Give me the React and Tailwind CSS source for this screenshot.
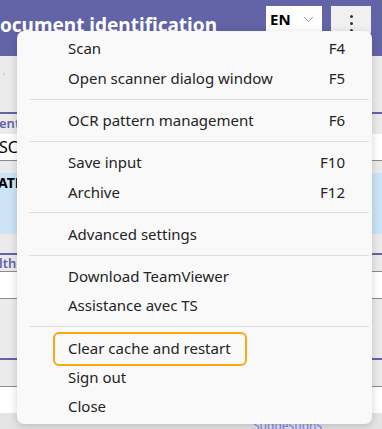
import React from 'react';

const menuGroups = [
  [
    { label: 'Scan', key: 'F4' },
    { label: 'Open scanner dialog window', key: 'F5' },
  ],
  [{ label: 'OCR pattern management', key: 'F6' }],
  [
    { label: 'Save input', key: 'F10' },
    { label: 'Archive', key: 'F12' },
  ],
  [{ label: 'Advanced settings' }],
  [{ label: 'Download TeamViewer' }, { label: 'Assistance avec TS' }],
  [{ label: 'Clear cache and restart', focused: true }, { label: 'Sign out' }, { label: 'Close' }],
];

function MenuItem({ item }) {
  return (
    <div className="h-[29.3px] flex items-center justify-between pl-[51px] pr-[27px] text-[15px] text-[#242424]">
      <span className="relative">
        {item.label}
        {item.focused && (
          <span className="absolute -left-[15px] -right-[16px] -top-[5px] -bottom-[7px] border-2 border-[#f7a817] rounded-[6px]" />
        )}
      </span>
      {item.key && <span>{item.key}</span>}
    </div>
  );
}

export default function App() {
  return (
    <div className="relative w-[382px] h-[429px] overflow-hidden bg-[#ebebeb] font-['Noto_Sans','Open_Sans',sans-serif]">
      {/* header */}
      <div className="h-[56px] bg-[#6264a7] flex items-start pr-[11px]">
        <h1 className="-ml-[14px] mt-[12px] text-white font-bold text-[19px] leading-[26px] whitespace-nowrap">
          Document identification
        </h1>
        <div className="ml-auto mt-[6px] flex gap-[9px]">
          <div className="w-[56px] h-[27px] bg-white flex items-center justify-between pl-[4px] pr-[8px]">
            <span className="font-bold text-[15px] text-black">EN</span>
            <svg width="11" height="7" viewBox="0 0 11 7" fill="none">
              <path d="M1 1l4.5 4.5L10 1" stroke="#9a9a9a" strokeWidth="1" />
            </svg>
          </div>
          <div className="w-[40px] h-[27px] bg-[#f0f0f0] flex flex-col items-center pt-[9px] gap-[4px]">
            <span className="w-[3px] h-[3px] rounded-full bg-[#333]" />
            <span className="w-[3px] h-[3px] rounded-full bg-[#333]" />
            <span className="w-[3px] h-[3px] rounded-full bg-[#333]" />
          </div>
        </div>
      </div>

      {/* page body, mostly under the menu */}
      <div className="flex flex-col">
        <div className="h-[56px] pl-[3px] pt-[14px] text-[#bbb] text-[10px]">'</div>
        <div className="h-[2px] bg-[#6264a7]" />
        <div className="h-[20px] text-[#6264a7] text-[13px] font-semibold leading-[18px] -ml-[1px]">ent</div>
        <div className="h-[27px] bg-white border-b border-[#8a8a8a] text-[16px] leading-[26px] -ml-[1px]">SCAN</div>
        <div className="mt-[12px] h-[61px] bg-[#cce4f7] font-bold text-[14px] leading-[20px] -ml-[2px]">ATHLETE</div>
        <div className="mt-[19px] h-[2px] bg-[#6264a7]" />
        <div className="h-[16px] text-[#6264a7] text-[13px] font-semibold leading-[16px] -ml-[1px]">lth</div>
        <div className="h-[28px] bg-white border-y border-[#8a8a8a]" />
        <div className="mt-[59px] h-[2px] bg-[#6264a7]" />
        <div className="mt-[26px] h-[28px] bg-white border-y border-[#8a8a8a]" />
      </div>

      {/* bottom bar */}
      <div className="absolute left-0 right-0 bottom-0 h-[16px] bg-[#e4e4e4] pl-[253px] text-[12px] leading-[26px] text-[#7b83eb] overflow-hidden">
        Suggestions
      </div>

      {/* dropdown menu */}
      <div className="absolute left-[17px] top-[31px] w-[355px] h-[393px] bg-[#f9f9f9] rounded-[7px] shadow-[0_2px_8px_rgba(0,0,0,0.18)] pt-[3px]">
        {menuGroups.map((group, gi) => (
          <div key={gi}>
            {gi > 0 && <div className="my-[6px] ml-[12px] mr-[3px] h-px bg-[#dedede]" />}
            {group.map((item) => (
              <MenuItem key={item.label} item={item} />
            ))}
          </div>
        ))}
      </div>
    </div>
  );
}
